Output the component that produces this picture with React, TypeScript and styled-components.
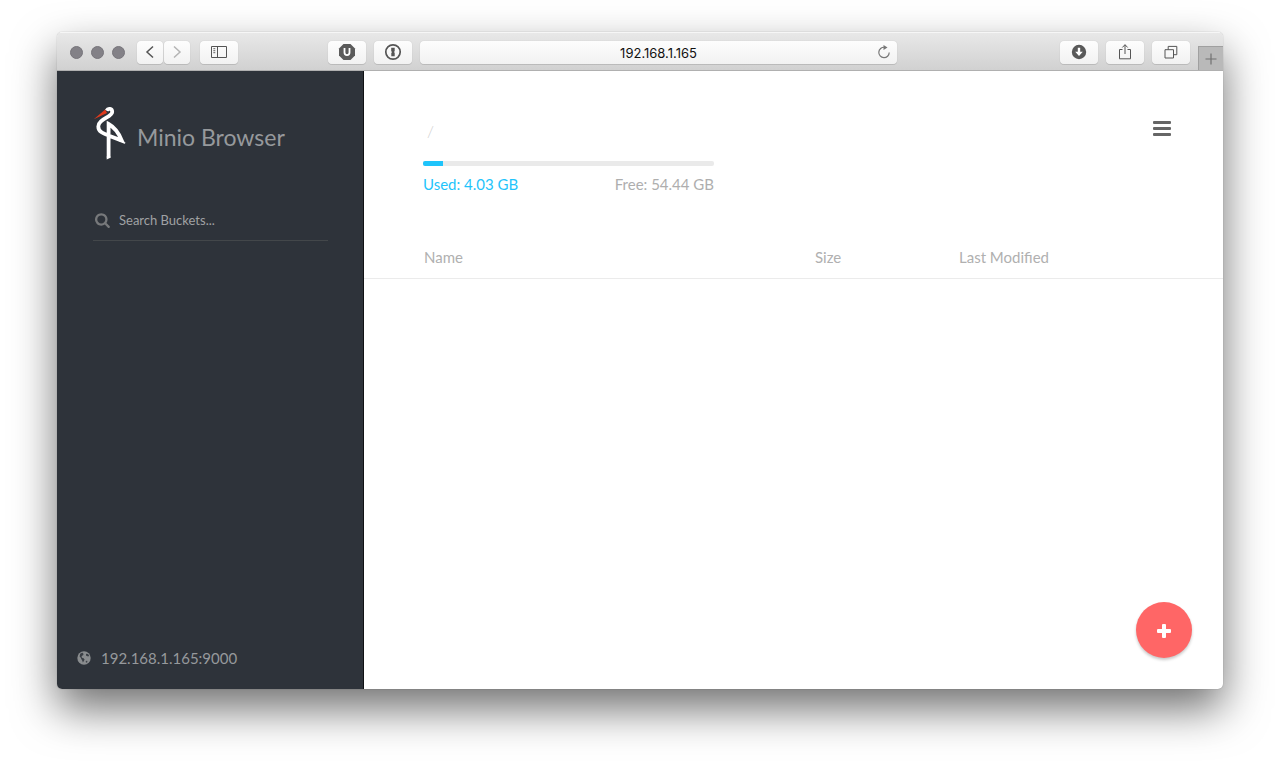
import React from "react";
import styled, { createGlobalStyle, css } from "styled-components";

const GlobalStyle = createGlobalStyle`
  *, *::before, *::after { box-sizing: border-box; }
  body {
    margin: 0;
    background: #fff;
    font-family: Lato, "Liberation Sans", sans-serif;
  }
  button, input { font: inherit; }
  svg { display: block; }
`;

const Desktop = styled.div`
  display: flex;
  min-height: 100vh;
  padding: 32px 57px 82px;
  overflow: hidden;
`;

const BrowserWindow = styled.div`
  flex: 1;
  display: flex;
  flex-direction: column;
  border-radius: 5px;
  background: #fff;
  overflow: hidden;
  box-shadow: 0 0 1px rgba(0, 0, 0, 0.4), 0 20px 44px rgba(0, 0, 0, 0.56);
`;

const Toolbar = styled.header`
  display: flex;
  align-items: center;
  height: 39px;
  padding: 2px 0 0 13px;
  border-top: 1px solid #f6f6f6;
  border-bottom: 1px solid #b0b0b0;
  background: linear-gradient(#e8e8e8, #d1d1d1);
`;

const Lights = styled.div`
  display: flex;
  gap: 8px;
  margin-right: 12px;
`;

const Light = styled.span`
  width: 13px;
  height: 13px;
  border-radius: 50%;
  border: 1px solid #77757b;
  background: #838187;
`;

const Group = styled.div<{ $gap: number }>`
  display: flex;
  gap: ${(p) => p.$gap}px;
`;

const chromeSurface = css`
  height: 23px;
  border: 0;
  border-radius: 4px;
  background: linear-gradient(#fdfdfd, #f2f2f2);
  box-shadow: 0 0 1px rgba(0, 0, 0, 0.22), 0 1px 0 rgba(0, 0, 0, 0.1);
`;

const ToolButton = styled.button<{ $narrow?: boolean }>`
  ${chromeSurface}
  display: flex;
  align-items: center;
  justify-content: center;
  width: ${(p) => (p.$narrow ? 26 : 38)}px;
  padding: 0 0 1px;
  color: #555;
  &:disabled { color: #b4b4b4; }
`;

const SidebarToggle = styled(ToolButton)`
  margin-left: 10px;
`;

const Extensions = styled(Group)`
  flex: 1;
  margin: 0 163px 0 90px;
`;

const AddressBar = styled.div`
  ${chromeSurface}
  flex: 1;
  display: flex;
  align-items: center;
`;

const AddressInput = styled.input`
  flex: 1;
  min-width: 0;
  padding: 0 0 0 26px;
  border: 0;
  background: none;
  color: #111;
  font-family: Inter, "Liberation Sans", sans-serif;
  font-size: 13px;
  text-align: center;
  outline: none;
`;

const ReloadButton = styled.button`
  display: flex;
  justify-content: center;
  width: 26px;
  padding: 0 0 1px;
  border: 0;
  background: none;
  color: #777;
`;

const NewTab = styled.button`
  align-self: flex-end;
  display: flex;
  align-items: center;
  justify-content: center;
  width: 25px;
  height: 24px;
  margin-left: 8px;
  padding: 0;
  border: 1px solid #a0a0a0;
  border-width: 1px 0 0 1px;
  background: #b9b9b9;
  color: #707070;
`;

const Page = styled.div`
  flex: 1;
  display: flex;
`;

const Sidebar = styled.aside`
  display: flex;
  flex-direction: column;
  width: 307px;
  padding: 35px 35px 20px 36px;
  border-right: 1px solid #101214;
  background: #2e333a;
  color: #96999c;
`;

const Brand = styled.h1`
  display: flex;
  align-items: flex-start;
  gap: 10px;
  height: 54px;
  margin: 0;
  font-size: 23px;
  font-weight: 400;
  line-height: 32px;
`;

const BrandName = styled.span`
  padding-top: 15px;
`;

const SearchBox = styled.label`
  display: flex;
  align-items: center;
  gap: 8px;
  height: 40px;
  margin-top: 41px;
  padding: 0 0 1px 2px;
  border-bottom: 1px solid #43474a;
  color: #77797b;
`;

const SearchInput = styled.input`
  flex: 1;
  min-width: 0;
  padding: 0;
  border: 0;
  background: none;
  color: #a0a2a4;
  font-size: 13px;
  line-height: 20px;
  outline: none;
  &::placeholder { color: #a0a2a4; opacity: 1; }
`;

const Host = styled.footer`
  display: flex;
  align-items: center;
  gap: 10px;
  margin: auto 0 0 -16px;
  font-size: 15px;
  line-height: 22px;
`;

const Main = styled.main`
  position: relative;
  flex: 1;
  min-width: 0;
`;

const TopBar = styled.div`
  display: flex;
  justify-content: space-between;
  align-items: flex-start;
  padding: 50px 51px 0 59px;
`;

const Summary = styled.div`
  width: 291px;
  font-size: 15px;
  line-height: 20px;
`;

const Crumb = styled.a`
  display: block;
  padding-left: 4px;
  color: #cfcfcf;
  font-size: 16px;
  font-weight: 300;
  line-height: 20px;
  text-decoration: none;
`;

const Meter = styled.div`
  height: 5px;
  margin: 20px 0 8px;
  border-radius: 2px;
  background: #eaeaea;
  overflow: hidden;
`;

const MeterFill = styled.div`
  height: 100%;
  background: #1fc4fb;
`;

const Usage = styled.div`
  display: flex;
  justify-content: space-between;
  color: #aeaeae;
`;

const Used = styled.span`
  color: #1fc4fb;
`;

const MenuButton = styled.button`
  padding: 0;
  border: 0;
  background: none;
  color: #666;
`;

const Files = styled.table`
  width: 100%;
  margin-top: 42px;
  table-layout: fixed;
  border-collapse: collapse;
`;

const Column = styled.th<{ $width?: string }>`
  width: ${(p) => p.$width ?? "auto"};
  height: 42px;
  padding: 0;
  border-bottom: 1px solid #ebebeb;
  color: #b0b0b0;
  font-size: 15px;
  font-weight: 400;
  line-height: 20px;
  text-align: left;
  &:first-child { padding-left: 60px; }
`;

const AddButton = styled.button`
  position: absolute;
  right: 31px;
  bottom: 31px;
  display: flex;
  align-items: center;
  justify-content: center;
  width: 56px;
  height: 56px;
  padding: 2px 0 0;
  border: 0;
  border-radius: 50%;
  background: #ff6666;
  color: #fff;
  box-shadow: 0 2px 3px rgba(0, 0, 0, 0.22);
`;

const line = { fill: "none", stroke: "currentColor" } as const;

const Chevron = ({ next }: { next?: boolean }) => (
  <svg width="10" height="14" viewBox="0 0 10 14" {...line} strokeWidth="1.5">
    <path d={next ? "M2 1.5 8 7l-6 5.5" : "M8 1.5 2 7l6 5.5"} />
  </svg>
);

const SidebarIcon = () => (
  <svg width="16" height="14" viewBox="0 0 16 14" {...line}>
    <path d="M.5 1.5h15v11H.5zM6.5 1.5v11" />
    <path d="M2.3 3.7h2M2.3 5.7h2M2.3 7.7h2" strokeWidth=".9" />
  </svg>
);

const ShieldIcon = () => (
  <svg width="18" height="18" viewBox="0 0 18 18">
    <path d="M5.5 1h7L17 5.5v7L12.5 17h-7L1 12.5v-7z" fill="#5b5b5b" />
    <path d="M6.5 5v4.6a2.5 2.5 0 0 0 5 0V5" fill="none" stroke="#fff" strokeWidth="1.8" />
  </svg>
);

const KeyholeIcon = () => (
  <svg width="18" height="18" viewBox="0 0 18 18">
    <circle cx="9" cy="9" r="7.2" fill="none" stroke="#555" strokeWidth="1.7" />
    <path d="M7.2 4.7h3.5v3.5l-.8.8.8.8v3.5H7.3V9.9l.8-.8-.9-.8z" fill="#555" />
  </svg>
);

const ReloadIcon = () => (
  <svg width="14" height="14" viewBox="0 0 14 14">
    <path d="M7.5 2.3A5.2 5.2 0 1 0 12.2 7.5" {...line} strokeWidth="1.2" />
    <path d="M6.5 0 10.5 2.6 6.5 5z" fill="currentColor" />
  </svg>
);

const DownloadIcon = () => (
  <svg width="16" height="16" viewBox="0 0 16 16">
    <circle cx="8" cy="8" r="7.2" fill="#595959" />
    <path d="M6.8 3.8h2.4v4h2.6L8 12 4.2 7.8h2.6z" fill="#fff" />
  </svg>
);

const ShareIcon = () => (
  <svg width="14" height="18" viewBox="0 0 14 18" {...line}>
    <path d="M4.5 6.5h-3v9.3h11V6.5h-3M7 11V1.8M4.3 4.5 7 1.7l2.7 2.8" />
  </svg>
);

const TabsIcon = () => (
  <svg width="14" height="14" viewBox="0 0 14 14" {...line}>
    <path d="M1 4.7h8.5v8.3H1zM4.2 4.7V1.4h8.6v8.3H9.5" />
  </svg>
);

const ThinPlus = () => (
  <svg width="12" height="12" viewBox="0 0 12 12" {...line}>
    <path d="M6 .5v11M.5 6h11" strokeWidth="1.2" />
  </svg>
);

const StorkLogo = () => (
  <svg width="34" height="54" viewBox="0 0 34 54">
    <path
      d="M13.6 4.6C15 1.9 19.2 2.4 19.2 6C19.2 11 5.3 13 5.3 20.5C5.3 25.5 9.5 27.3 16 29.8L28.8 34.6C26 27.5 21 21 15.6 18V51.5"
      fill="none"
      stroke="#fff"
      strokeWidth="3.8"
    />
    <path d="M26.5 31.5 33 37.3 24.5 34.7z" fill="#fff" />
    <path d="M13.7 53.5V50.5h3.8v1.3z" fill="#fff" />
    <path d="M12.2 3.4.8 13.2 14 7z" fill="#e03a1c" />
  </svg>
);

const SearchIcon = () => (
  <svg width="16" height="16" viewBox="0 0 1792 1792" fill="currentColor">
    <path d="M1152 832q0-185-131.5-316.5t-316.5-131.5-316.5 131.5-131.5 316.5 131.5 316.5 316.5 131.5 316.5-131.5 131.5-316.5zm512 832q0 52-38 90t-90 38q-54 0-90-38l-343-342q-179 124-399 124-143 0-273.5-55.5t-225-150-150-225-55.5-273.5 55.5-273.5 150-225 225-150 273.5-55.5 273.5 55.5 225 150 150 225 55.5 273.5q0 220-124 399l343 343q37 37 37 90z" />
  </svg>
);

const GlobeIcon = () => (
  <svg width="14" height="14" viewBox="0 0 14 14">
    <circle cx="7" cy="7" r="6.7" fill="#898c8e" />
    <path
      d="M3.2 2.8 5 1.8 6.5 2 5.8 3 6.8 3.7 5.5 4.6 4.5 5.6 5 6.7 6.6 7.3 7.6 8.6 6.7 10.2 5.9 11.6 5.2 9.5 4.3 8 3.6 6.6 2.6 5.5zM9 2.7 11 3 12.2 4.7 11.2 5.6 9.8 5 9 4.6zM8.5 10.8 10 9.6 10.5 10.9 9.3 11.8z"
      fill="#3a3f45"
    />
  </svg>
);

const MenuIcon = () => (
  <svg width="20" height="16" viewBox="0 0 20 16" fill="currentColor">
    <rect x="1" y="0" width="18" height="3" rx="1" />
    <rect x="1" y="6" width="18" height="3" rx="1" />
    <rect x="1" y="12" width="18" height="3" rx="1" />
  </svg>
);

const BoldPlus = () => (
  <svg width="14" height="14" viewBox="0 0 14 14" fill="currentColor">
    <rect x="5" y="0" width="4" height="14" rx="1" />
    <rect x="0" y="5" width="14" height="4" rx="1" />
  </svg>
);

const usedGb = 4.03;
const freeGb = 54.44;

export default function App() {
  return (
    <>
      <GlobalStyle />
      <Desktop>
        <BrowserWindow>
          <Toolbar>
            <Lights>
              <Light />
              <Light />
              <Light />
            </Lights>
            <Group $gap={1}>
              <ToolButton $narrow aria-label="Back"><Chevron /></ToolButton>
              <ToolButton $narrow disabled aria-label="Forward"><Chevron next /></ToolButton>
            </Group>
            <SidebarToggle aria-label="Show sidebar"><SidebarIcon /></SidebarToggle>
            <Extensions $gap={8}>
              <ToolButton aria-label="Content blocker"><ShieldIcon /></ToolButton>
              <ToolButton aria-label="Passwords"><KeyholeIcon /></ToolButton>
              <AddressBar>
                <AddressInput aria-label="Address" defaultValue="192.168.1.165" />
                <ReloadButton aria-label="Reload"><ReloadIcon /></ReloadButton>
              </AddressBar>
            </Extensions>
            <Group $gap={8}>
              <ToolButton aria-label="Downloads"><DownloadIcon /></ToolButton>
              <ToolButton aria-label="Share"><ShareIcon /></ToolButton>
              <ToolButton aria-label="Show tabs"><TabsIcon /></ToolButton>
            </Group>
            <NewTab aria-label="New tab"><ThinPlus /></NewTab>
          </Toolbar>
          <Page>
            <Sidebar>
              <Brand>
                <StorkLogo />
                <BrandName>Minio Browser</BrandName>
              </Brand>
              <SearchBox>
                <SearchIcon />
                <SearchInput type="text" aria-label="Search buckets" placeholder="Search Buckets..." />
              </SearchBox>
              <Host>
                <GlobeIcon />
                192.168.1.165:9000
              </Host>
            </Sidebar>
            <Main>
              <TopBar>
                <Summary>
                  <Crumb href="#">/</Crumb>
                  <Meter>
                    <MeterFill style={{ width: `${(usedGb / (usedGb + freeGb)) * 100}%` }} />
                  </Meter>
                  <Usage>
                    <Used>Used: {usedGb} GB</Used>
                    <span>Free: {freeGb} GB</span>
                  </Usage>
                </Summary>
                <MenuButton aria-label="Menu"><MenuIcon /></MenuButton>
              </TopBar>
              <Files>
                <thead>
                  <tr>
                    <Column>Name</Column>
                    <Column $width="144px">Size</Column>
                    <Column $width="264px">Last Modified</Column>
                  </tr>
                </thead>
              </Files>
              <AddButton aria-label="Add"><BoldPlus /></AddButton>
            </Main>
          </Page>
        </BrowserWindow>
      </Desktop>
    </>
  );
}
